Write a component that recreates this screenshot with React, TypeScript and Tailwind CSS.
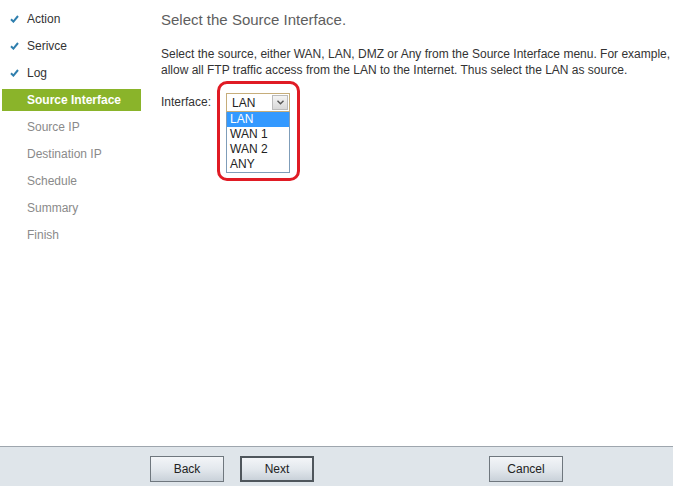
import React from "react";

const steps = [
  { label: "Action", done: true },
  { label: "Serivce", done: true },
  { label: "Log", done: true },
  { label: "Source Interface", active: true },
  { label: "Source IP" },
  { label: "Destination IP" },
  { label: "Schedule" },
  { label: "Summary" },
  { label: "Finish" },
];

const options = ["LAN", "WAN 1", "WAN 2", "ANY"];

function Check() {
  return (
    <svg width="9" height="8" viewBox="0 0 9 8" className="mr-[8px]">
      <path d="M1 4.2 L3.4 6.6 L8 1" fill="none" stroke="#2f7fae" strokeWidth="2" />
    </svg>
  );
}

function Btn({ label, focused }: { label: string; focused?: boolean }) {
  return (
    <button
      className={`w-[74px] h-[26px] text-[12px] text-[#222] bg-gradient-to-b from-[#f3f5f8] via-[#e3e8ed] to-[#c9d1d9] ${
        focused ? "border-2 border-[#4f565c]" : "border border-[#6f777e]"
      }`}
    >
      {label}
    </button>
  );
}

export default function App() {
  return (
    <div className="w-[673px] h-[486px] flex flex-col bg-white font-['Liberation_Sans',Arial,sans-serif] overflow-hidden">
      <div className="flex flex-1">
        {/* wizard steps */}
        <div className="w-[143px] pl-[2px] pt-[5px]">
          {steps.map((s) =>
            s.active ? (
              <div key={s.label} className="h-[27px] flex items-center">
                <div className="w-[139px] h-[22px] bg-[#8ab42a] flex items-center pl-[25px] text-[12px] font-bold text-white">
                  {s.label}
                </div>
              </div>
            ) : (
              <div key={s.label} className="h-[27px] flex items-center pl-[8px] text-[12px]">
                {s.done ? <Check /> : <span className="w-[17px]" />}
                <span className={s.done ? "text-[#333]" : "text-[#8a8a8a]"}>{s.label}</span>
              </div>
            )
          )}
        </div>

        {/* content */}
        <div className="flex-1 pl-[18px] pt-[11px]">
          <h1 className="text-[15px] text-[#5e5e5e] leading-[18px]">Select the Source Interface.</h1>
          <p className="mt-[17px] text-[12px] leading-[16px] text-[#333] whitespace-nowrap">
            Select the source, either WAN, LAN, DMZ or Any from the Source Interface menu. For example,
            <br />
            allow all FTP traffic access from the LAN to the Internet. Thus select the LAN as source.
          </p>
          <div className="flex items-start mt-[15px]">
            <span className="text-[12px] leading-[19px] text-[#333] mr-[15px]">Interface:</span>
            <div className="relative">
              <div className="absolute -left-[9px] -top-[12px] w-[83px] h-[100px] border-[3px] border-[#e01b24] rounded-[10px]" />
              <div className="w-[64px] h-[19px] border border-[#c6ad7a] flex items-center bg-white">
                <span className="flex-1 text-[12px] text-[#222] pl-[5px]">LAN</span>
                <span className="w-[16px] h-[15px] mr-[1px] bg-gradient-to-b from-[#f4f4f4] to-[#d8d8d8] border border-[#bbb] flex items-center justify-center">
                  <svg width="7" height="5" viewBox="0 0 7 5">
                    <path d="M0.5 0.8 L3.5 3.8 L6.5 0.8" fill="none" stroke="#555" strokeWidth="1.4" />
                  </svg>
                </span>
              </div>
              <div className="w-[64px] border border-[#7f9db9] border-t-0 bg-white">
                {options.map((o, i) => (
                  <div
                    key={o}
                    className={`h-[15px] leading-[15px] pl-[3px] text-[12px] ${
                      i === 0 ? "bg-[#3399ff] text-white" : "text-[#222]"
                    }`}
                  >
                    {o}
                  </div>
                ))}
              </div>
            </div>
          </div>
        </div>
      </div>

      {/* footer */}
      <div className="h-[40px] border-t border-[#9ea6ae] bg-[#dfe5ea] flex items-start pl-[150px] pt-[9px]">
        <Btn label="Back" />
        <div className="ml-[16px]">
          <Btn label="Next" focused />
        </div>
        <div className="ml-[175px]">
          <Btn label="Cancel" />
        </div>
      </div>
    </div>
  );
}
